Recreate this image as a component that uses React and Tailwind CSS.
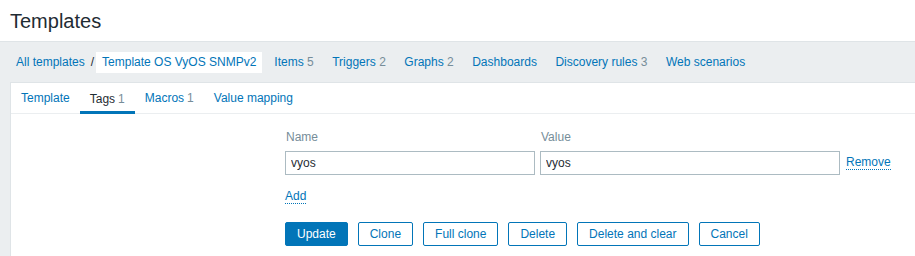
import React from "react";

const navItems = [
  { label: "Items", count: 5 },
  { label: "Triggers", count: 2 },
  { label: "Graphs", count: 2 },
  { label: "Dashboards" },
  { label: "Discovery rules", count: 3 },
  { label: "Web scenarios" },
];

const tabs = [
  { label: "Template" },
  { label: "Tags", count: 1, active: true },
  { label: "Macros", count: 1 },
  { label: "Value mapping" },
];

const buttons = ["Clone", "Full clone", "Delete", "Delete and clear", "Cancel"];

const App = () => {
  return (
    <div
      className="w-[915px] h-[256px] overflow-hidden bg-[#ebeef0] text-[12px] text-[#1f2c33]"
      style={{ fontFamily: '"Liberation Sans", Arial, sans-serif' }}
    >
      {/* page title */}
      <div className="h-[42px] bg-white border-b border-[#dfe4e7] flex items-center pl-[10px]">
        <h1 className="text-[20px] leading-none font-normal">Templates</h1>
      </div>

      {/* breadcrumbs + navigation */}
      <div className="h-[40px] flex items-center pl-[16px]">
        <a className="text-[#0275b8]">All templates</a>
        <span className="ml-[6px] mr-[2px]">/</span>
        <span className="bg-white h-[21px] leading-[21px] px-[6px] text-[#0275b8]">
          Template OS VyOS SNMPv2
        </span>
        <div className="flex gap-[18.5px] ml-[12px]">
          {navItems.map((item) => (
            <a key={item.label} className="text-[#0275b8]">
              {item.label}
              {item.count ? <span className="text-[#768d99]"> {item.count}</span> : null}
            </a>
          ))}
        </div>
      </div>

      {/* panel */}
      <div className="ml-[10px] bg-white border-t border-l border-[#dfe4e7] h-[200px]">
        <div className="flex h-[31px] border-b border-[#ebeef0]">
          {tabs.map((tab) => (
            <div
              key={tab.label}
              className={
                tab.active
                  ? "px-[10px] flex items-center border-b-[3px] border-[#0275b8] pt-[3px] mb-[-1px]"
                  : "px-[10px] flex items-center text-[#0275b8]"
              }
            >
              {tab.label}
              {tab.count ? <span className="text-[#768d99] ml-[3px]">{tab.count}</span> : null}
            </div>
          ))}
        </div>

        <div className="pl-[274px] pt-[16px]">
          <div className="flex gap-[5px] text-[#768d99] leading-[14px]">
            <div className="w-[250px] pl-[1px]">Name</div>
            <div className="w-[300px] pl-[1px]">Value</div>
          </div>
          <div className="flex items-center gap-[5px] mt-[7px]">
            <input
              className="w-[250px] h-[24px] border border-[#acbbc2] px-[5px] outline-none text-[#1f2c33]"
              defaultValue="vyos"
              style={{ fontFamily: "inherit", fontSize: "12px" }}
            />
            <input
              className="w-[300px] h-[24px] border border-[#acbbc2] px-[5px] outline-none text-[#1f2c33]"
              defaultValue="vyos"
              style={{ fontFamily: "inherit", fontSize: "12px" }}
            />
            <a className="ml-[1px] text-[#0275b8] border-b border-dotted border-[#0275b8] leading-[13px]">
              Remove
            </a>
          </div>
          <div className="mt-[12px] h-[16px]">
            <a className="text-[#0275b8] border-b border-dotted border-[#0275b8] leading-[13px] inline-block">
              Add
            </a>
          </div>
          <div className="flex gap-[10px] mt-[19px]">
            <button className="h-[24px] px-[11px] border border-[#0275b8] bg-[#0275b8] text-white rounded-[2px]">
              Update
            </button>
            {buttons.map((b) => (
              <button
                key={b}
                className="h-[24px] px-[11px] border border-[#0275b8] bg-white text-[#0275b8] rounded-[2px]"
              >
                {b}
              </button>
            ))}
          </div>
        </div>
      </div>
    </div>
  );
};

export default App;
